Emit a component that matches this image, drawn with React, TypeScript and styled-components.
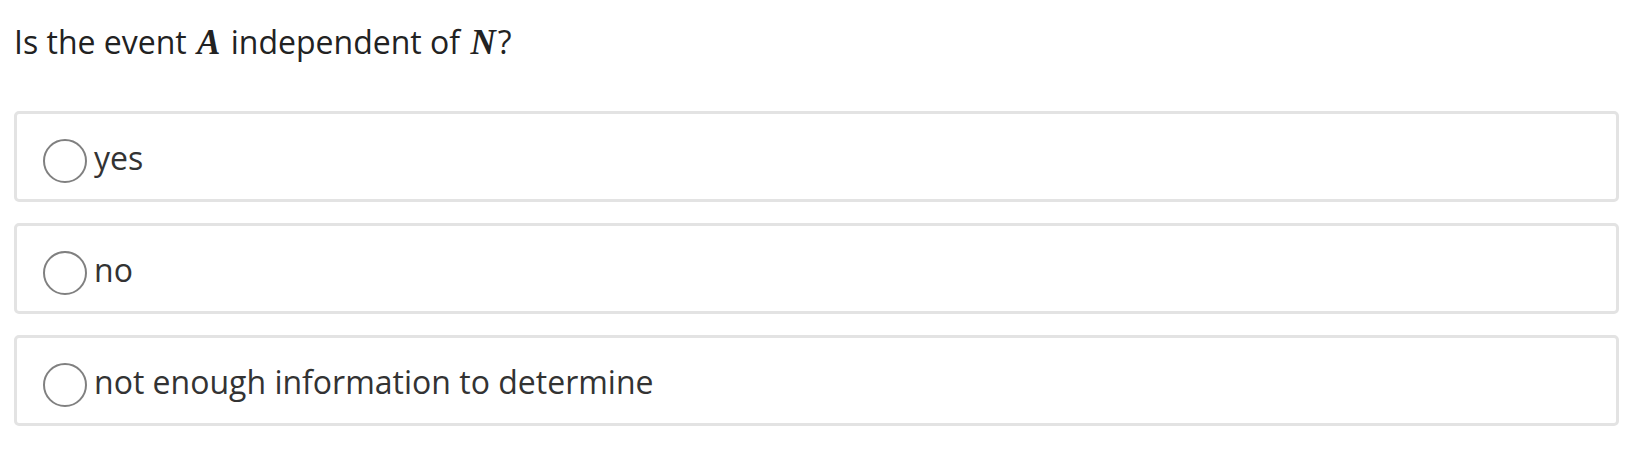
import styled, { createGlobalStyle } from "styled-components";

const Global = createGlobalStyle`
  html, body {
    margin: 0;
    background: #ffffff;
  }
  body {
    font-family: "Open Sans", "Noto Sans", sans-serif;
    color: #333333;
  }
`;

const Page = styled.main`
  width: 1605px;
  padding: 20px 0 0 14px;
`;

const Question = styled.p`
  margin: 0 0 46px;
  font-size: 32px;
  line-height: 44px;
  color: #222222;
`;

const MathVar = styled.span`
  font-family: "Liberation Serif", "DejaVu Serif", serif;
  font-style: italic;
  font-weight: bold;
  font-size: 35px;
  margin: 0 2px;
`;

const Options = styled.div`
  display: flex;
  flex-direction: column;
  gap: 21px;
`;

const Option = styled.label`
  display: flex;
  align-items: center;
  gap: 7px;
  height: 85px;
  padding: 0 26px;
  border: 3px solid #e3e3e3;
  border-radius: 5px;
  cursor: pointer;
`;

const Radio = styled.span`
  box-sizing: border-box;
  width: 44px;
  height: 44px;
  border: 2px solid #808080;
  border-radius: 50%;
  flex-shrink: 0;
  margin-top: 8px;
`;

const Label = styled.span`
  font-size: 32px;
  color: #333333;
  line-height: 44px;
  margin-top: 2px;
`;

const choices = ["yes", "no", "not enough information to determine"];

export default function App() {
  return (
    <Page>
      <Global />
      <Question>
        Is the event <MathVar>A</MathVar> independent of <MathVar>N</MathVar>?
      </Question>
      <Options>
        {choices.map((c) => (
          <Option key={c}>
            <Radio />
            <Label>{c}</Label>
          </Option>
        ))}
      </Options>
    </Page>
  );
}
